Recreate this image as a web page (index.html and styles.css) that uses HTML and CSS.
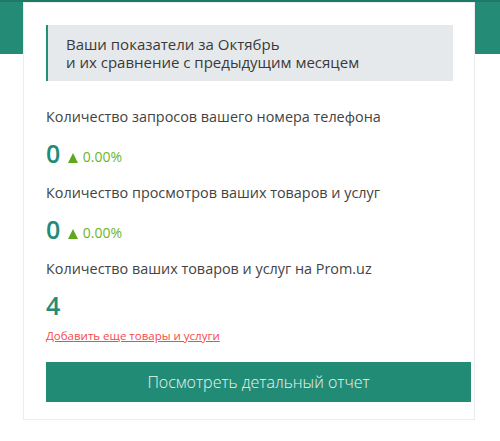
FILE: index.html
```html
<!DOCTYPE html>
<html lang="ru">
<head>
  <meta charset="UTF-8" />
  <meta name="viewport" content="width=device-width, initial-scale=1.0"/>
  <title>Ваши показатели</title>
  <link rel="stylesheet" href="styles.css">
</head>
<body>
  <div class="band"></div>
  <div class="card">
    <div class="notice">
      Ваши показатели за Октябрь<br>
      и их сравнение с предыдущим месяцем
    </div>

    <div class="stat">
      <div class="stat-title">Количество запросов вашего номера телефона</div>
      <div class="stat-value">0 <span class="delta"><i class="arrow-up"></i>0.00%</span></div>
    </div>

    <div class="stat">
      <div class="stat-title">Количество просмотров ваших товаров и услуг</div>
      <div class="stat-value">0 <span class="delta"><i class="arrow-up"></i>0.00%</span></div>
    </div>

    <div class="stat">
      <div class="stat-title">Количество ваших товаров и услуг на Prom.uz</div>
      <div class="stat-value">4</div>
    </div>

    <a class="add-link" href="#">Добавить еще товары и услуги</a>

    <button class="report-btn" type="button">Посмотреть детальный отчет</button>
  </div>
</body>
</html>
```

FILE: styles.css
```css
* {
  box-sizing: border-box;
}
body {
  font-family: 'Open Sans', 'Noto Sans', sans-serif;
  margin: 0;
  background: #ffffff;
  color: #333;
}
.band {
  height: 54px;
  background: #238b76;
  border-top: 2px solid #1d7a67;
}
.card {
  width: 452px;
  margin: -52px 0 0 23px;
  background: #ffffff;
  border: 1px solid #ececec;
  padding: 22px 21px 17px 22px;
}
.notice {
  background: #e6e9eb;
  border-left: 2px solid #21917a;
  padding: 10px 18px;
  font-size: 15px;
  line-height: 18px;
  color: #3a3a3a;
}
.stat {
  margin-top: 26px;
}
.stat + .stat {
  margin-top: 15px;
}
.stat-title {
  font-size: 14.4px;
  line-height: 20px;
  color: #434343;
}
.stat-value {
  height: 30px;
  margin-top: 11px;
  font-size: 25px;
  line-height: 30px;
  font-weight: 600;
  color: #238b76;
}
.delta {
  font-size: 14px;
  line-height: 1;
  font-weight: 400;
  color: #6cb52a;
  vertical-align: 1px;
}
.arrow-up {
  display: inline-block;
  width: 0;
  height: 0;
  margin: 0 5px 0 1px;
  border-left: 5px solid transparent;
  border-right: 5px solid transparent;
  border-bottom: 10px solid #5fa81c;
  vertical-align: -1px;
}
.add-link {
  display: block;
  margin-top: 8px;
  font-size: 11.5px;
  line-height: 16px;
  color: #f64a4a;
}
.report-btn {
  display: block;
  width: calc(100% + 18px);
  height: 40px;
  margin-top: 18px;
  border: none;
  background: #228b76;
  color: #eaf4f1;
  font-family: 'Open Sans', 'Noto Sans', sans-serif;
  font-size: 16px;
  font-weight: 300;
}
```
